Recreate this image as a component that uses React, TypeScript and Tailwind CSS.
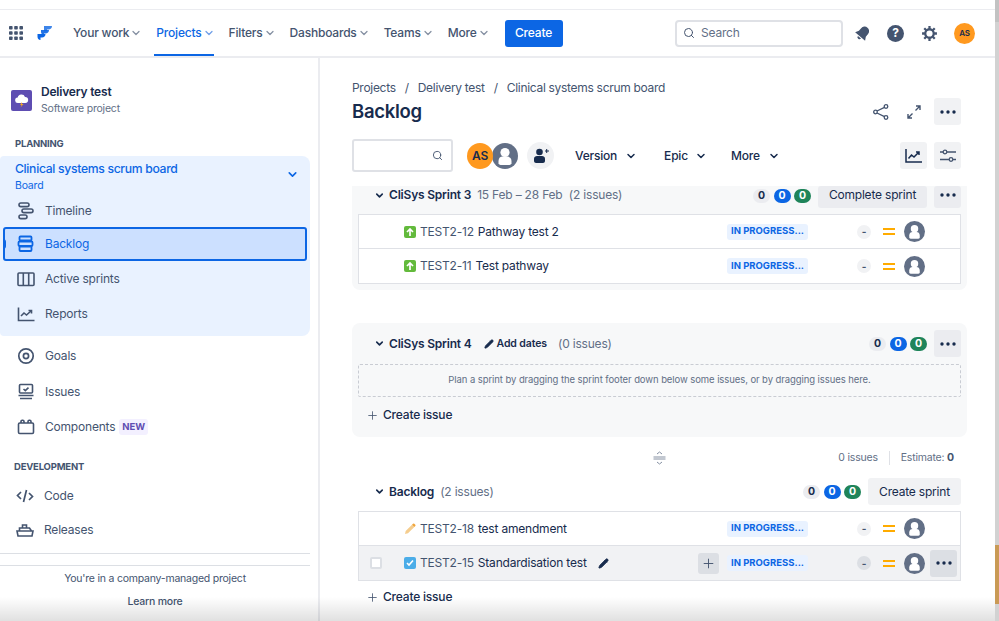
import React from 'react';
import { ChevronDown, Search, Plus, Pencil } from 'lucide-react';

const Dots = () => (
  <svg width="16" height="4" viewBox="0 0 16 4" className="text-[#172b4d]" fill="currentColor">
    <circle cx="2" cy="2" r="1.7" />
    <circle cx="8" cy="2" r="1.7" />
    <circle cx="14" cy="2" r="1.7" />
  </svg>
);

const Person = ({ size = 21 }: { size?: number }) => (
  <svg width={size} height={size} viewBox="0 0 26 26" className="shrink-0">
    <circle cx="13" cy="13" r="13" fill="#626f86" />
    <circle cx="13" cy="9.5" r="4.6" fill="#fff" />
    <path d="M6.5 18c0-3 2-4.4 4-4.4h5c2 0 4 1.4 4 4.4v2.6a2.5 2.5 0 0 1-2 1.4h-9a2.5 2.5 0 0 1-2-1.4z" fill="#fff" />
  </svg>
);

const NavItem = ({ label, active }: { label: string; active?: boolean }) => (
  <div className={`relative flex h-[46px] items-center gap-[1px] px-[2px] text-[12px] font-medium ${active ? 'text-[#0c66e4]' : 'text-[#44546f]'}`}>
    {label}
    <ChevronDown size={12} strokeWidth={2.5} className={active ? 'text-[#6f9fe8]' : 'text-[#8590a2]'} />
    {active && <span className="absolute bottom-0 left-0 right-[3px] h-[2px] bg-[#0c66e4]" />}
  </div>
);

const iconCls = 'shrink-0';
const SideIcons: Record<string, React.ReactNode> = {
  Timeline: (
    <svg width="18" height="18" viewBox="0 0 18 18" fill="none" stroke="currentColor" strokeWidth="1.6" className={iconCls}>
      <rect x="2" y="1" width="10" height="3.6" rx="1.8" />
      <rect x="5" y="7" width="11" height="3.6" rx="1.8" />
      <rect x="2" y="13" width="8" height="3.6" rx="1.8" />
    </svg>
  ),
  Backlog: (
    <svg width="18" height="18" viewBox="0 0 18 18" fill="none" stroke="currentColor" strokeWidth="1.8" className={iconCls}>
      <rect x="2.5" y="1.5" width="12" height="4" rx="1" />
      <rect x="1.5" y="6.5" width="14" height="4.5" rx="1" />
      <rect x="2.5" y="11.5" width="12" height="4.5" rx="1" />
    </svg>
  ),
  'Active sprints': (
    <svg width="18" height="18" viewBox="0 0 18 18" fill="none" stroke="currentColor" strokeWidth="1.6" className={iconCls}>
      <rect x="1" y="3" width="16" height="12.5" rx="1" />
      <path d="M6.3 3v12.5M11.7 3v12.5" />
    </svg>
  ),
  Reports: (
    <svg width="18" height="18" viewBox="0 0 18 18" fill="none" stroke="currentColor" strokeWidth="1.6" className={iconCls}>
      <path d="M1.5 2.5v13h16" />
      <path d="M4 11l3-3 2.5 2 5-4.5" />
      <path d="M11.5 5.5h3v3" />
    </svg>
  ),
  Goals: (
    <svg width="18" height="18" viewBox="0 0 18 18" fill="none" stroke="currentColor" strokeWidth="1.7" className={iconCls}>
      <circle cx="9" cy="9" r="7.2" />
      <circle cx="9" cy="9" r="2.6" />
    </svg>
  ),
  Issues: (
    <svg width="18" height="18" viewBox="0 0 18 18" fill="none" stroke="currentColor" strokeWidth="1.6" className={iconCls}>
      <rect x="2.5" y="1.5" width="13" height="8.5" rx="1" />
      <path d="M6.5 6l1.8 1.6 3.2-3" />
      <path d="M1.5 12.5h15M3 15.5h12" />
    </svg>
  ),
  Components: (
    <svg width="18" height="18" viewBox="0 0 18 18" fill="none" stroke="currentColor" strokeWidth="1.6" className={iconCls}>
      <rect x="1.5" y="5" width="15" height="10.5" rx="1.2" />
      <path d="M4 5V3.500a1.200 1.200 0 0 1 1.200-1.200h.6A1.200 1.200 0 0 1 7 3.500V5M11 5V3.500a1.200 1.200 0 0 1 1.200-1.200h.6A1.200 1.200 0 0 1 14 3.500V5" />
    </svg>
  ),
  Code: (
    <svg width="18" height="18" viewBox="0 0 18 18" fill="none" stroke="currentColor" strokeWidth="1.7" className={iconCls}>
      <path d="M5 5L1.500 8.500 5 12M13 6l3.500 3.500L13 13M10.500 3L7.500 15" />
    </svg>
  ),
  Releases: (
    <svg width="18" height="18" viewBox="0 0 18 18" fill="none" stroke="currentColor" strokeWidth="1.6" className={iconCls}>
      <path d="M1 10h16l-1 5H2z" />
      <path d="M3.500 10V7h10l2 3M6.500 7V4h4v3" />
    </svg>
  ),
};

const SideRow = ({ label, active, h = 'h-[34px]', badge }: { label: string; active?: boolean; h?: string; badge?: boolean }) => (
  <div
    className={`relative flex ${h} items-center gap-[9px] rounded-[3px] text-[12px] ${
      active ? 'border-2 border-[#0c66e4] bg-[#cce0ff] pl-[11px] text-[#0c66e4]' : 'pl-[13px] text-[#44546f]'
    }`}
  >
    {active && <span className="absolute -left-[2px] top-[10px] h-[10px] w-[3px] rounded-r bg-[#0c66e4]" />}
    <span className="flex w-[20px] justify-center">{SideIcons[label]}</span>
    {label}
    {badge && (
      <span className="-ml-[5px] rounded-[3px] bg-[#f3f0ff] px-[3px] py-px text-[9.5px] font-bold tracking-normal text-[#5e4db2]">NEW</span>
    )}
  </div>
);

const Sidebar = () => (
  <aside className="flex w-[320px] shrink-0 flex-col border-r-[2px] border-[#ebecf0] pr-[8px]">
    <div className="flex items-center gap-[9px] pl-[11px] pt-[25px]">
      <div className="flex h-[21px] w-[21px] items-center justify-center rounded-[2px] bg-[#5e4db2]">
        <svg width="15" height="15" viewBox="0 0 15 15">
          <path d="M4 10a2.700 2.700 0 0 1-.3-5.400 3.800 3.800 0 0 1 7.300-.6 3 3 0 0 1 .3 6z" fill="#fff" />
          <path d="M8 9L6 12h1.500L6.500 14.500 9.500 11H8z" fill="#f5a623" />
        </svg>
      </div>
      <div>
        <div className="text-[12px] font-semibold leading-[18px] text-[#172b4d]">Delivery test</div>
        <div className="text-[10.5px] leading-[16px] text-[#626f86]">Software project</div>
      </div>
    </div>

    <div className="pl-[15px] pt-[20px] text-[9.5px] font-bold leading-[14px] text-[#44546f]">PLANNING</div>
    <div className="mt-[5px] rounded-r-[8px] rounded-l-[4px] bg-[#e9f2ff] pb-[4px]">
      <div className="flex items-center pl-[15px] pr-[11px]">
        <div className="flex-1 pt-[3px]">
          <div className="text-[12.2px] font-medium leading-[19px] tracking-[-0.32px] text-[#0c66e4]">Clinical systems scrum board</div>
          <div className="text-[10.5px] leading-[15px] text-[#0c66e4]">Board</div>
        </div>
        <ChevronDown size={13} strokeWidth={3} className="text-[#0c66e4]" />
      </div>
      <div className="px-[3px] pt-[1px]">
        <SideRow label="Timeline" h="h-[33px]" />
        <SideRow label="Backlog" active />
        <SideRow label="Active sprints" h="h-[35px]" />
        <SideRow label="Reports" h="h-[36px]" />
      </div>
    </div>

    <div className="px-[3px] pt-[2px]">
      <SideRow label="Goals" h="h-[36px]" />
      <SideRow label="Issues" h="h-[36px]" />
      <SideRow label="Components" h="h-[34px]" badge />
    </div>

    <div className="pl-[14px] pt-[16px] text-[9.5px] font-bold leading-[14px] text-[#44546f]">DEVELOPMENT</div>
    <div className="pt-[5px] pl-[2px]">
      <SideRow label="Code" />
      <SideRow label="Releases" />
    </div>

    <div className="h-[7px] border-b-[1.5px] border-[#dcdfe4]" />
    <div className="mt-[11px] border-t-[1.5px] border-[#dcdfe4] pt-[5px] text-center text-[10.5px] leading-[16px] tracking-[-0.22px] text-[#44546f]">
      You're in a company-managed project
      <div className="mt-[7px] font-medium text-[#44546f]">Learn more</div>
    </div>
  </aside>
);

const Counts = ({ className = '' }: { className?: string }) => (
  <div className={`flex items-center gap-[3.5px] text-[10.5px] font-bold ${className}`}>
    <span className="flex h-[14px] w-[17px] items-center justify-center rounded-full bg-[#ebecf0] text-[#172b4d]">0</span>
    <span className="flex h-[14px] w-[17px] items-center justify-center rounded-full bg-[#0c66e4] text-white">0</span>
    <span className="flex h-[14px] w-[17px] items-center justify-center rounded-full bg-[#1f845a] text-white">0</span>
  </div>
);

const StoryIcon = () => (
  <span className="flex h-[12px] w-[12px] shrink-0 items-center justify-center rounded-[2px] bg-[#63ba3c]">
    <svg width="8" height="8" viewBox="0 0 8 8" fill="none" stroke="#fff" strokeWidth="1.7">
      <path d="M1 4l3-3 3 3M4 1.500V8" />
    </svg>
  </span>
);

const TaskIcon = () => (
  <span className="flex h-[12px] w-[12px] shrink-0 items-center justify-center rounded-[2px] bg-[#4bade8]">
    <svg width="8" height="8" viewBox="0 0 8 8" fill="none" stroke="#fff" strokeWidth="1.6">
      <path d="M1 4l2 2 4-4.500" />
    </svg>
  </span>
);

const PencilIcon = () => (
  <svg width="12" height="12" viewBox="0 0 12 12" className="shrink-0">
    <path d="M1 11l.7-3L8 1.700 10.300 4 4 10.300z" fill="#f5cd8e" />
    <path d="M8 1.700l1-1a1 1 0 0 1 1.300 0l1 1a1 1 0 0 1 0 1.300l-1 1z" fill="#f0a53c" />
  </svg>
);

type RowProps = {
  id: string;
  title: string;
  icon: React.ReactNode;
  hover?: boolean;
  last?: boolean;
};

const IssueRow = ({ id, title, icon, hover, last }: RowProps) => (
  <div className={`flex h-[34px] items-center pr-[3px] ${hover ? 'bg-[#f1f2f4]' : 'bg-white'} ${last ? '' : 'border-b-[1.5px] border-[#dfe1e6]'}`}>
    <span className="w-[45px] shrink-0 pl-[11px]">
      {hover && <span className="block h-[12px] w-[12px] rounded-[2px] border-2 border-[#dcdfe4] bg-white" />}
    </span>
    {icon}
    <span className="ml-[4px] text-[12px] text-[#44546f]">{id}</span>
    <span className="ml-[4px] text-[12px] text-[#172b4d]">{title}</span>
    {hover && <Pencil size={11} fill="#172b4d" strokeWidth={2} className="ml-[11px] text-[#172b4d]" />}
    <div className="flex-1" />
    {hover && (
      <span className="mr-[8px] flex h-[21px] w-[21px] items-center justify-center rounded-[3px] bg-[#dcdfe4]">
        <Plus size={15} strokeWidth={1.5} className="text-[#44546f]" />
      </span>
    )}
    <span className="mr-[49px] flex h-[16px] w-[81px] items-center justify-center rounded-[3px] bg-[#e9f2ff] text-[9.5px] font-bold tracking-normal text-[#0c66e4]">
      IN PROGRESS...
    </span>
    <span className={`flex h-[14px] w-[14px] items-center justify-center rounded-full text-[10px] font-bold text-[#44546f] ${hover ? 'mr-[2px] bg-[#dcdfe4]' : 'bg-[#f1f2f4]'}`}>-</span>
    <span className={`flex w-[12px] flex-col gap-[3px] ${hover ? 'ml-[10px]' : 'ml-[12px]'}`}>
      <span className="h-[2px] bg-[#ffab00]" />
      <span className="h-[2px] bg-[#ffab00]" />
    </span>
    <span className="ml-[9px]"><Person size={21} /></span>
    <span className={`ml-[5px] flex h-[27px] w-[27px] items-center justify-center rounded-[3px] ${hover ? 'bg-[#dcdfe4]' : ''}`}>
      {hover && <Dots />}
    </span>
  </div>
);

const SectionTitle = ({ children }: { children: React.ReactNode }) => (
  <div className="flex items-center text-[12px] text-[#172b4d]">
    <ChevronDown size={11} strokeWidth={3.5} className="mr-[4px]" />
    {children}
  </div>
);

const CreateIssue = () => (
  <div className="flex items-center gap-[4px] text-[12px] font-medium text-[#172b4d]">
    <Plus size={13} strokeWidth={1.5} className="text-[#44546f]" />
    Create issue
  </div>
);

export default function App() {
  return (
    <div className="relative h-[621px] w-[999px] overflow-hidden bg-white font-['Inter',sans-serif] tracking-[-0.2px]">
      <div className="flex h-full flex-col pr-[4px]">
        <div className="h-[10px] shrink-0 border-b border-[#ebecf0]" />
        {/* top nav */}
        <header className="flex h-[48px] shrink-0 items-center border-b-[2px] border-[#ebecf0] pl-[9px] pr-[20px]">
          <svg width="14" height="14" viewBox="0 0 14 14" fill="#44546f">
            {[0, 1, 2].flatMap((r) =>
              [0, 1, 2].map((c) => <rect key={`${r}-${c}`} x={c * 5.2} y={r * 5.2} width="3.6" height="3.6" rx="0.8" />)
            )}
          </svg>
          <svg width="16" height="16" viewBox="0 0 16 16" className="ml-[14px]" fill="#0c66e4">
            <path d="M7 1h8c0 2-1.500 3.500-3.500 3.500H10V6a3.500 3.500 0 0 1-3 0z" opacity="0.8" />
            <path d="M4 5h8c0 2-1.500 3.500-3.500 3.500H7V10c-2 0-3-1.500-3-3z" opacity="0.9" />
            <path d="M0.500 9h8c0 2-1.500 3.500-3.500 3.500H3.500V15c-2 0-3-1.500-3-3.500z" />
          </svg>
          <nav className="ml-[18px] flex items-center gap-[10px] self-end">
            <NavItem label="Your work" />
            <NavItem label="Projects" active />
            <NavItem label="Filters" />
            <NavItem label="Dashboards" />
            <NavItem label="Teams" />
            <NavItem label="More" />
          </nav>
          <button className="ml-[13px] flex h-[27px] w-[58px] items-center justify-center rounded-[3px] bg-[#0c66e4] text-[12px] font-medium text-white">
            Create
          </button>
          <div className="flex-1" />
          <div className="flex h-[27px] w-[168px] items-center rounded-[4px] border-2 border-[#dfe1e6] pl-[6px] text-[12px] text-[#626f86]">
            <Search size={12} strokeWidth={2} className="text-[#44546f]" />
            <span className="ml-[6px]">Search</span>
          </div>
          <svg width="16" height="16" viewBox="0 0 16 16" fill="#44546f" className="ml-[12px] rotate-[40deg]">
            <path d="M8 1a4.500 4.500 0 0 0-4.500 4.500V9L1.500 12.500h13L12.500 9V5.500A4.500 4.500 0 0 0 8 1z" />
            <path d="M6 13.500a2 2 0 0 0 4 0z" />
          </svg>
          <div className="ml-[16px] flex h-[17px] w-[17px] items-center justify-center rounded-full bg-[#44546f] text-[12px] font-bold text-white">?</div>
          <svg width="17" height="17" viewBox="0 0 24 24" fill="none" stroke="#44546f" strokeWidth="3.2" className="ml-[17px]">
            <circle cx="12" cy="12" r="6" />
            <path d="M12 1.500v4M12 18.500v4M1.500 12h4M18.500 12h4M4.600 4.600l2.800 2.800M16.600 16.600l2.800 2.800M4.600 19.400l2.800-2.800M16.600 7.400l2.800-2.800" />
          </svg>
          <div className="ml-[16px] flex h-[21px] w-[21px] items-center justify-center rounded-full bg-[#ff991f] text-[8px] font-semibold text-[#172b4d]">AS</div>
        </header>

        <div className="flex min-h-0 flex-1">
          <Sidebar />

          <main className="min-w-0 flex-1 pl-[32px] pr-[28px]">
            <div className="flex items-center gap-[9px] pt-[21px] text-[12px] leading-[18px] tracking-[-0.3px] text-[#44546f]">
              <span>Projects</span><span>/</span><span>Delivery test</span><span>/</span><span>Clinical systems scrum board</span>
            </div>
            <div className="mr-[6px] flex h-[29px] items-center">
              <h1 className="flex-1 text-[18.5px] font-semibold tracking-[-0.3px] text-[#172b4d]">Backlog</h1>
              <svg width="16" height="16" viewBox="0 0 16 16" fill="none" stroke="#44546f" strokeWidth="1.3" className="mr-[18px]">
                <circle cx="2.5" cy="8" r="1.8" /><circle cx="13" cy="2.5" r="1.8" /><circle cx="13" cy="13.5" r="1.8" />
                <path d="M4 7l7.500-3.700M4 9l7.500 3.700" />
              </svg>
              <svg width="14" height="14" viewBox="0 0 14 14" fill="none" stroke="#44546f" strokeWidth="1.4" className="mr-[13px]">
                <path d="M8.500 5.500L13 1M9 1h4v4M5.500 8.500L1 13M1 9v4h4" />
              </svg>
              <span className="flex h-[27px] w-[27px] items-center justify-center rounded-[3px] bg-[#f1f2f4]"><Dots /></span>
            </div>

            {/* filters */}
            <div className="mr-[6px] mt-[13px] flex h-[33px] items-center text-[12px] font-medium text-[#172b4d]">
              <div className="flex h-[33px] w-[101px] items-center justify-end rounded-[3px] border-2 border-[#dfe1e6] pr-[8px]">
                <Search size={11} strokeWidth={2} className="text-[#44546f]" />
              </div>
              <span className="relative z-10 ml-[14px] flex h-[26px] w-[26px] items-center justify-center rounded-full bg-[#ff991f] text-[12px] font-semibold text-[#172b4d]">AS</span>
              <span className="-ml-px"><Person size={26} /></span>
              <span className="ml-[9px] flex h-[27px] w-[27px] items-center justify-center rounded-full bg-[#f1f2f4]">
                <svg width="16" height="15" viewBox="0 0 16 15" fill="#172b4d">
                  <circle cx="6.5" cy="4" r="3.3" />
                  <path d="M1 10.500C1 9 2.500 8 4 8h5c1.500 0 3 1 3 2.500V13c0 1-1 2-2 2H3c-1 0-2-1-2-2z" />
                  <path d="M12 2.500h1.200V1h1v1.500H16v1h-1.800V5h-1V3.500H12z" />
                </svg>
              </span>
              <span className="ml-[21px]">Version</span>
              <ChevronDown size={12} strokeWidth={3} className="ml-[8px]" />
              <span className="ml-[27px]">Epic</span>
              <ChevronDown size={12} strokeWidth={3} className="ml-[7px]" />
              <span className="ml-[24px]">More</span>
              <ChevronDown size={12} strokeWidth={3} className="ml-[8px]" />
              <div className="flex-1" />
              <span className="mr-[7px] flex h-[27px] w-[27px] items-center justify-center rounded-[3px] bg-[#f1f2f4] text-[#172b4d]">
                <svg width="17" height="14" viewBox="0 0 17 14" fill="none" stroke="currentColor" strokeWidth="1.5">
                  <path d="M1 0v13h16" /><path d="M3.500 9.500L6.500 6l2.500 2 4.500-4.500M11 3h3v3" />
                </svg>
              </span>
              <span className="flex h-[27px] w-[27px] items-center justify-center rounded-[3px] bg-[#f1f2f4] text-[#44546f]">
                <svg width="16" height="14" viewBox="0 0 16 14" fill="none" stroke="currentColor" strokeWidth="1.3">
                  <path d="M0 3h3M7 3h9M0 10.500h9M13 10.500h3" />
                  <circle cx="5" cy="3" r="1.8" /><circle cx="11" cy="10.5" r="1.8" />
                </svg>
              </span>
            </div>

            {/* Sprint 3 - its header is scrolled partly under the filters */}
            <section className="mt-[14px] h-[104px] rounded-b-[8px] bg-[#f7f8f9] px-[6px]">
              <div className="flex h-[22px] items-center">
                <div className="mb-[4px] pl-[16px]">
                  <SectionTitle>
                    <span className="font-semibold">CliSys Sprint 3</span>
                    <span className="ml-[6px] text-[#626f86]">15 Feb – 28 Feb&nbsp; (2 issues)</span>
                  </SectionTitle>
                </div>
                <div className="flex-1" />
                <Counts className="mb-[3px]" />
                <span className="ml-[7px] flex h-[22px] w-[109px] items-center justify-center rounded-[3px] bg-[#ebecf0] pb-[4px] text-[12px] text-[#172b4d]">Complete sprint</span>
                <span className="ml-[7px] flex h-[22px] w-[27px] items-center justify-center rounded-[3px] bg-[#ebecf0] pb-[4px]"><Dots /></span>
              </div>
              <div className="mt-[6px] border-[1.5px] border-[#dfe1e6]">
                <IssueRow id="TEST2-12" title="Pathway test 2" icon={<StoryIcon />} />
                <IssueRow id="TEST2-11" title="Test pathway" icon={<StoryIcon />} last />
              </div>
            </section>

            {/* Sprint 4 */}
            <section className="mt-[33px] h-[114px] rounded-[8px] bg-[#f7f8f9] px-[6px]">
              <div className="flex h-[41px] items-center">
                <div className="pl-[16px]">
                  <SectionTitle>
                    <span className="font-semibold">CliSys Sprint 4</span>
                    <span className="ml-[12px] flex items-center gap-[3px] text-[10.5px] font-semibold tracking-[-0.1px]">
                      <Pencil size={10} fill="#172b4d" strokeWidth={2} />
                      Add dates
                    </span>
                    <span className="ml-[11px] text-[#626f86]">(0 issues)</span>
                  </SectionTitle>
                </div>
                <div className="flex-1" />
                <Counts />
                <span className="ml-[7px] flex h-[27px] w-[27px] items-center justify-center rounded-[3px] bg-[#ebecf0]"><Dots /></span>
              </div>
              <div className="flex h-[33px] items-center justify-center rounded-[2px] border-[1.5px] border-dashed border-[#c9ccd3] text-[9.5px] tracking-[-0.08px] text-[#626f86]">
                Plan a sprint by dragging the sprint footer down below some issues, or by dragging issues here.
              </div>
              <div className="pl-[8px] pt-[9px]"><CreateIssue /></div>
            </section>

            {/* divider */}
            <div className="relative mt-[13px] flex h-[16px] items-center justify-end pr-[13px] text-[10.5px] text-[#626f86]">
              <svg width="13" height="14" viewBox="0 0 13 14" fill="none" stroke="#8590a2" strokeWidth="1" className="absolute left-[301px] top-[1px]">
                <path d="M4 3l2.500-2L9 3M0.500 6h12M0.500 8h12M4 11l2.500 2L9 11" />
              </svg>
              <span>0 issues</span>
              <span className="mx-[11px] h-[14px] w-px bg-[#dfe1e6]" />
              <span>Estimate: <b className="text-[#44546f]">0</b></span>
            </div>

            {/* Backlog */}
            <section className="mt-[12px] px-[6px]">
              <div className="flex h-[27px] items-center">
                <div className="pl-[16px]">
                  <SectionTitle>
                    <span className="font-semibold">Backlog</span>
                    <span className="ml-[6px] text-[#626f86]">(2 issues)</span>
                  </SectionTitle>
                </div>
                <div className="flex-1" />
                <Counts />
                <span className="ml-[7px] flex h-[27px] w-[93px] items-center justify-center rounded-[3px] bg-[#f1f2f4] text-[12px] text-[#172b4d]">Create sprint</span>
              </div>
              <div className="mt-[6px] border-[1.5px] border-[#dfe1e6]">
                <IssueRow id="TEST2-18" title="test amendment" icon={<PencilIcon />} />
                <IssueRow id="TEST2-15" title="Standardisation test" icon={<TaskIcon />} hover last />
              </div>
              <div className="pl-[8px] pt-[7px]"><CreateIssue /></div>
            </section>
          </main>
        </div>
      </div>

      {/* bottom fade and the window edge behind the page */}
      <div className="pointer-events-none absolute bottom-0 left-0 right-[4px] h-[24px] bg-gradient-to-b from-transparent to-[#0000001f]" />
      <div className="absolute bottom-0 right-0 top-0 flex w-[4px] flex-col bg-[#d2d2d2]">
        <div className="h-[22px] bg-[#c2c2c2]" />
        <div className="mt-[523px] h-[59px] bg-[#c99a55]" />
      </div>
    </div>
  );
}
